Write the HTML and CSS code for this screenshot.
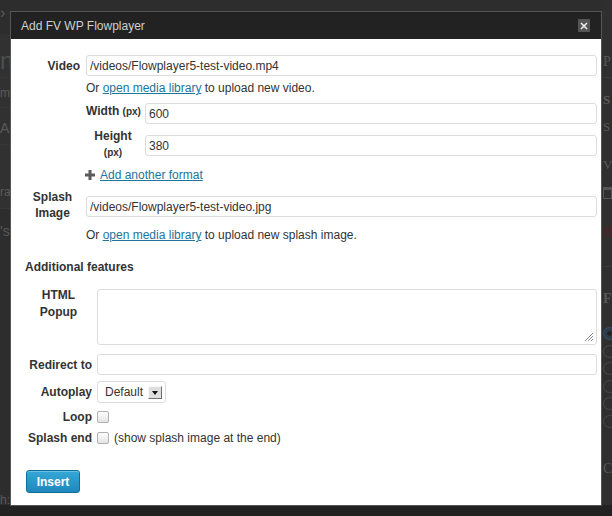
FILE: index.html
```html
<!DOCTYPE html>
<html lang="en">
<head>
<meta charset="utf-8">
<title>Add FV WP Flowplayer</title>
<link rel="stylesheet" href="styles.css">
</head>
<body>
<div class="page">
  <div class="page-main">
    <div class="bg-left">
      <div class="fl f1">›</div>
      <div class="fl f2">nt</div>
      <div class="fl f3">m</div>
      <div class="fl f4">Ac</div>
      <div class="fl f5">ra</div>
      <div class="fl f6">'s</div>
      <div class="fl f7">h:</div>
    </div>
    <div class="bg-center"></div>
    <div class="bg-right">
      <div class="fr r1">P</div>
      <div class="fr r2">S</div>
      <div class="fr r3">S</div>
      <div class="fr r4">V</div>
      <div class="fr r5"><span class="cal"></span></div>
      <div class="fr r6">M</div>
      <div class="fr r7">F</div>
      <div class="fr r8">
        <span class="radio on"></span>
        <span class="radio"></span>
        <span class="radio"></span>
        <span class="radio"></span>
        <span class="radio"></span>
        <span class="radio"></span>
      </div>
      <div class="fr r9">C</div>
    </div>
  </div>
  <div class="page-foot"></div>
</div>

<div class="modal">
  <div class="modal-title">
    <span>Add FV WP Flowplayer</span>
    <button class="close" type="button" aria-label="Close">
      <svg width="8" height="8" viewBox="0 0 8 8"><path d="M1 1L7 7M7 1L1 7" stroke="#f2f2f2" stroke-width="1.5" fill="none"/></svg>
    </button>
  </div>
  <div class="modal-body">
    <div class="sec1">
      <div class="row r-video">
        <label class="lbl" for="src">Video</label>
        <input class="txt" id="src" type="text" value="/videos/Flowplayer5-test-video.mp4">
      </div>
      <div class="row r-note">
        <span></span>
        <p class="note">Or <a href="#">open media library</a> to upload new video.</p>
      </div>
      <div class="row r-dims">
        <span></span>
        <div class="dims">
          <div class="drow r-width">
            <label class="lbl" for="width">Width <small>(px)</small></label>
            <input class="txt" id="width" type="text" value="600">
          </div>
          <div class="drow r-height">
            <label class="lbl lbl-c" for="height">Height<br><small>(px)</small></label>
            <input class="txt" id="height" type="text" value="380">
          </div>
        </div>
      </div>
      <div class="row r-add">
        <span></span>
        <p class="add">
          <svg class="plus" width="10" height="10" viewBox="0 0 10 10"><rect x="3.5" y="0" width="3" height="10" fill="#5a5a5a"/><rect x="0" y="3.5" width="10" height="3" fill="#5a5a5a"/></svg>
          <a href="#">Add another format</a>
        </p>
      </div>
      <div class="row r-splash">
        <label class="lbl lbl-c" for="splash">Splash Image</label>
        <input class="txt" id="splash" type="text" value="/videos/Flowplayer5-test-video.jpg">
      </div>
      <div class="row r-note2">
        <span></span>
        <p class="note">Or <a href="#">open media library</a> to upload new splash image.</p>
      </div>
    </div>

    <h3 class="heading">Additional features</h3>

    <div class="sec2">
      <div class="row r-popup">
        <label class="lbl lbl-c lbl-popup" for="popup">HTML Popup</label>
        <div class="area-wrap">
          <textarea class="area" id="popup"></textarea>
          <svg class="grip" width="11" height="11" viewBox="0 0 11 11"><path d="M10 2L2 10M10 5L5 10M10 8L8 10" stroke="#8a8a8a" stroke-width="1" fill="none"/></svg>
        </div>
      </div>
      <div class="row r-redirect">
        <label class="lbl" for="redirect">Redirect to</label>
        <input class="txt" id="redirect" type="text" value="">
      </div>
      <div class="row r-autoplay">
        <label class="lbl" for="autoplay">Autoplay</label>
        <div class="sel">
          <select id="autoplay"><option>Default</option><option>On</option><option>Off</option></select>
          <span class="sel-arrow"></span>
        </div>
      </div>
      <div class="row r-loop">
        <label class="lbl" for="loop">Loop</label>
        <div class="chk"><input class="cb" id="loop" type="checkbox"></div>
      </div>
      <div class="row r-send">
        <label class="lbl" for="send">Splash end</label>
        <div class="chk"><input class="cb" id="send" type="checkbox"><span>(show splash image at the end)</span></div>
      </div>
    </div>

    <button class="btn" type="button">Insert</button>
  </div>
</div>
</body>
</html>
```

FILE: styles.css
```css
* { box-sizing: border-box; }

html, body { margin: 0; padding: 0; }

body {
  width: 612px;
  height: 516px;
  overflow: hidden;
  position: relative;
  background: #2d2d2d;
  font-family: "Liberation Sans", Arial, sans-serif;
}

/* ---------- dimmed page behind the dialog ---------- */
.page {
  display: flex;
  flex-direction: column;
  height: 516px;
}

.page-main {
  display: flex;
  height: 505px;
}

.page-foot {
  height: 11px;
  background: #222;
}

.bg-left {
  width: 10px;
  display: flex;
  flex-direction: column;
  color: #5a5a5a;
  font-size: 12px;
}

.fl {
  white-space: nowrap;
  border-bottom: 1px solid #363636;
  flex-shrink: 0;
}

.f1 { height: 34px; padding-top: 4px; font-size: 16px; border-bottom: 0; }
.f2 { height: 44px; padding-top: 13px; font-size: 24px; color: #4f4f4f; background: #313131; }
.f3 { height: 30px; padding-top: 8px; background: #313131; }
.f4 { height: 37px; padding-top: 12px; font-size: 14px; background: #313131; }
.f5 { height: 64px; padding-top: 40px; background: #313131; }
.f6 { height: 40px; padding-top: 14px; font-size: 14px; border-bottom: 0; }
.f7 { height: 20px; margin-top: 244px; border-bottom: 0; }

.bg-center { flex: 1; }

.bg-right {
  width: 10px;
  display: flex;
  flex-direction: column;
  padding-left: 1px;
  color: #585858;
  font-family: "Liberation Serif", "Times New Roman", serif;
  font-size: 13px;
  white-space: nowrap;
  background: #2f2f2f;
}

.fr { flex-shrink: 0; }

.r1 { height: 78px; padding-top: 54px; font-size: 14px; border-bottom: 1px solid #3a3a3a; }
.r2 { height: 33px; padding-top: 14px; font-weight: bold; color: #5e5e5e; }
.r3 { height: 38px; padding-top: 8px; }
.r4 { height: 30px; padding-top: 8px; }
.r5 { height: 38px; padding-top: 8px; }
.r6 { height: 50px; padding-top: 8px; font-size: 10px; color: #5a2020; text-decoration: underline; border-bottom: 1px solid #3a3a3a; }
.r7 { height: 58px; padding-top: 24px; font-weight: bold; font-size: 14px; }
.r8 { display: flex; flex-direction: column; gap: 4.5px; padding-top: 2px; height: 132px; }
.r9 { padding-top: 4px; font-size: 14px; }

.cal {
  display: block;
  width: 9px;
  height: 12px;
  border: 1px solid #555;
  border-top-width: 3px;
}

.radio {
  display: block;
  width: 13px;
  height: 13px;
  border: 1px solid #4a4a4a;
  border-radius: 50%;
}

.radio.on {
  background: radial-gradient(circle, #222 0 2px, #2c3b4a 2.5px);
  border-color: #38506a;
}

/* ---------- dialog ---------- */
.modal {
  position: absolute;
  left: 10px;
  top: 11px;
  width: 592px;
  height: 495px;
  border: 1px solid #555;
  background: #fff;
  display: flex;
  flex-direction: column;
}

.modal-title {
  height: 27px;
  flex-shrink: 0;
  background: #222;
  color: #cfcfcf;
  font-size: 12px;
  display: flex;
  align-items: center;
  justify-content: space-between;
  padding: 0 11px 0 10px;
}

.close {
  width: 12px;
  height: 13px;
  background: #555;
  border: 0;
  border-radius: 1px;
  padding: 0;
  display: flex;
  align-items: center;
  justify-content: center;
  cursor: pointer;
}

.modal-body {
  padding: 16px 4px 0 14px;
  font-size: 12px;
  line-height: 16px;
  color: #333;
}

.row {
  display: grid;
  grid-template-columns: 55px 1fr;
  column-gap: 6px;
  align-items: center;
}

.sec2 .row {
  grid-template-columns: 67px 1fr;
  column-gap: 5px;
}

.lbl {
  font-weight: bold;
  text-align: right;
  white-space: nowrap;
  color: #333;
}

.lbl small {
  font-size: 10px;
}

.lbl-c {
  text-align: center;
  white-space: normal;
}

.txt {
  display: block;
  width: 100%;
  height: 21px;
  margin: 0;
  border: 1px solid #dcdcdc;
  border-radius: 3px;
  padding: 0 3px;
  font: 12px "Liberation Sans", Arial, sans-serif;
  color: #333;
  background: #fff;
  outline: none;
}

.note, .add {
  margin: 0;
}

a {
  color: #21759b;
  text-decoration: underline;
}

/* vertical rhythm */
.r-note { margin-top: 4px; }
.r-dims { margin-top: 7px; }

.drow {
  display: grid;
  grid-template-columns: 54px 1fr;
  column-gap: 5px;
  align-items: start;
}

.r-height { margin-top: 4px; }
.r-height .txt { margin-top: 7px; }

.r-add { margin-top: 6px; }

.add {
  display: flex;
  align-items: center;
  gap: 5px;
  margin-left: -1px;
}

.plus { display: block; }

.r-splash {
  margin-top: 6px;
  align-items: start;
}

.r-splash .txt { margin-top: 7px; }

.r-note2 { margin-top: 6px; }

.heading {
  margin: 16px 0 0;
  font-size: 12px;
  line-height: 16px;
  font-weight: bold;
  color: #333;
}

.r-popup {
  margin-top: 12px;
  align-items: start;
}

.lbl-popup {
  line-height: 17px;
}

.area-wrap {
  position: relative;
  margin-top: 2px;
}

.area {
  display: block;
  width: 100%;
  height: 56px;
  margin: 0;
  border: 1px solid #dcdcdc;
  border-radius: 3px;
  padding: 3px;
  font: 12px "Liberation Sans", Arial, sans-serif;
  resize: none;
  outline: none;
}

.grip {
  position: absolute;
  right: 3px;
  bottom: 3px;
  pointer-events: none;
}

.r-redirect { margin-top: 9px; }
.r-autoplay { margin-top: 6px; }

.sel {
  position: relative;
  width: 69px;
  height: 22px;
}

.sel select {
  appearance: none;
  -webkit-appearance: none;
  display: block;
  width: 100%;
  height: 100%;
  margin: 0;
  border: 1px solid #dcdcdc;
  border-radius: 3px;
  padding: 0 0 0 7px;
  font: 12px "Liberation Sans", Arial, sans-serif;
  color: #333;
  background: #fff;
  outline: none;
}

.sel-arrow {
  position: absolute;
  left: 51px;
  top: 5px;
  width: 14px;
  height: 13px;
  background: #dedede;
  border: 1px solid;
  border-color: #fafafa #6f6f6f #6f6f6f #fafafa;
  pointer-events: none;
}

.sel-arrow::after {
  content: "";
  position: absolute;
  left: 3px;
  top: 4px;
  border-left: 3px solid transparent;
  border-right: 3px solid transparent;
  border-top: 4px solid #111;
}

.r-loop { margin-top: 6px; }
.r-send { margin-top: 5px; }

.chk {
  display: flex;
  align-items: center;
  gap: 5px;
  height: 16px;
}

.cb {
  appearance: none;
  -webkit-appearance: none;
  display: block;
  width: 12px;
  height: 12px;
  margin: 0;
  border: 1px solid #b0b0b0;
  border-radius: 2px;
  background: linear-gradient(#fdfdfd, #e4e4e4);
}

.btn {
  display: block;
  margin-top: 24px;
  margin-left: 1px;
  width: 54px;
  height: 23px;
  padding: 0;
  border: 1px solid #0e6d9b;
  border-radius: 3px;
  background: linear-gradient(#35a7d6, #1f88bd);
  box-shadow: inset 0 1px 0 rgba(140, 210, 240, 0.6);
  color: #fff;
  font: bold 12px "Liberation Sans", Arial, sans-serif;
  cursor: pointer;
}
```
